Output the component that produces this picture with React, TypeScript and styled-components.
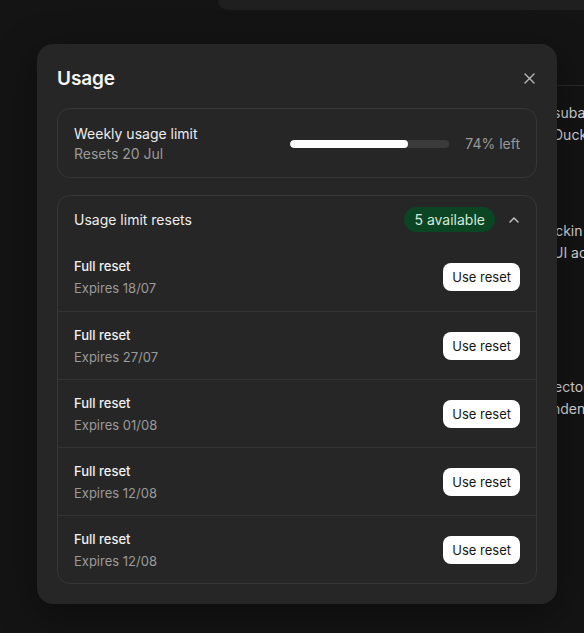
import React from "react";
import styled, { createGlobalStyle } from "styled-components";

const GlobalStyle = createGlobalStyle`
  html, body {
    margin: 0;
    padding: 0;
    background: #141414;
  }
  body {
    font-family: Inter, "Noto Sans", "Liberation Sans", sans-serif;
    -webkit-font-smoothing: antialiased;
  }
  * { box-sizing: border-box; }
`;

const Screen = styled.div`
  position: relative;
  width: 584px;
  height: 633px;
  overflow: hidden;
  background: #141414;
`;

/* ---------- page behind the dialog ---------- */

const Workspace = styled.div`
  display: flex;
  flex-direction: column;
  margin-left: 218px;
`;

const TopCard = styled.div`
  height: 10px;
  background: #1f1f1f;
  border-bottom-left-radius: 12px;
`;

const Rule = styled.div`
  margin-top: 75px;
  height: 1px;
  background: #2a2a2a;
`;

const Transcript = styled.div`
  display: flex;
  flex-direction: column;
  padding: 16px 0 0 335px;
`;

const Paragraph = styled.div<{ $space: number }>`
  display: flex;
  flex-direction: column;
  margin-top: ${(p) => p.$space}px;
  font-size: 14px;
  line-height: 22px;
  color: #d6d6d6;
  white-space: nowrap;
`;

const Line = styled.span<{ $shift: number }>`
  margin-left: ${(p) => p.$shift}px;
`;

/* ---------- dialog ---------- */

const Dialog = styled.div`
  position: absolute;
  left: 37px;
  top: 44px;
  width: 520px;
  height: 560px;
  background: #262626;
  border-radius: 16px;
  padding: 20px 20px 0;
  display: flex;
  flex-direction: column;
  box-shadow: 0 10px 40px rgba(0, 0, 0, 0.4);
`;

const DialogHeader = styled.div`
  display: flex;
  align-items: center;
  justify-content: space-between;
  height: 28px;
  margin-bottom: 16px;
`;

const Title = styled.h2`
  margin: 0;
  font-size: 19px;
  font-weight: 600;
  color: #f4f4f4;
  letter-spacing: -0.1px;
`;

const IconButton = styled.button`
  display: flex;
  align-items: center;
  justify-content: center;
  width: 20px;
  height: 20px;
  margin-right: -2px;
  padding: 0;
  border: none;
  background: transparent;
  color: #b8b8b8;
  cursor: pointer;
`;

const Panel = styled.section`
  border: 1px solid #363636;
  border-radius: 13px;
  display: flex;
  flex-direction: column;
`;

const LimitPanel = styled(Panel)`
  flex-direction: row;
  align-items: center;
  justify-content: space-between;
  height: 70px;
  padding: 2px 16px 0;
  margin-bottom: 17px;
`;

const Stack = styled.div`
  display: flex;
  flex-direction: column;
`;

const PrimaryText = styled.span`
  font-size: 14px;
  line-height: 20px;
  color: #ececec;
`;

const SecondaryText = styled.span`
  font-size: 14px;
  line-height: 20px;
  color: #999999;
`;

const Meter = styled.div`
  display: flex;
  align-items: center;
  gap: 16px;
  margin-top: -1px;
`;

const Track = styled.div`
  width: 159px;
  height: 8px;
  border-radius: 4px;
  background: #3b3b3b;
  overflow: hidden;
`;

const Fill = styled.div`
  height: 100%;
  border-radius: 4px;
  background: #ffffff;
`;

const PanelHeader = styled.div`
  display: flex;
  align-items: center;
  justify-content: space-between;
  height: 47px;
  padding: 0 16px;
`;

const HeaderEnd = styled.div`
  display: flex;
  align-items: center;
  gap: 13px;
`;

const Badge = styled.span`
  display: inline-flex;
  align-items: center;
  height: 25px;
  padding: 0 10px;
  border-radius: 13px;
  background: #0b4524;
  color: #d2ead8;
  font-size: 14px;
`;

const Chevron = styled.span`
  display: flex;
  width: 12px;
  justify-content: center;
  color: #c8c8c8;
`;

const ResetRow = styled.div<{ $first: boolean }>`
  display: flex;
  align-items: center;
  justify-content: space-between;
  height: 68px;
  padding: 0 16px;
  border-top: ${(p) => (p.$first ? "none" : "1px solid #333333")};
`;

const RowText = styled.div`
  display: flex;
  flex-direction: column;
  gap: 2px;
`;

const RowTitle = styled.span`
  font-size: 13px;
  line-height: 20px;
  font-weight: 500;
  color: #f0f0f0;
`;

const RowMeta = styled.span`
  font-size: 13px;
  line-height: 20px;
  color: #9a9a9a;
`;

const UseButton = styled.button`
  height: 28px;
  padding: 0 9px;
  border: none;
  border-radius: 8px;
  background: #ffffff;
  color: #161616;
  font-family: inherit;
  font-size: 13px;
  cursor: pointer;
`;

const resets = ["18/07", "27/07", "01/08", "12/08", "12/08"];

const paragraphs: { space: number; lines: { text: string; shift: number }[] }[] = [
  {
    space: 0,
    lines: [
      { text: "subag", shift: 0 },
      { text: "Duck", shift: 0 },
    ],
  },
  {
    space: 74,
    lines: [
      { text: "eckin", shift: -6 },
      { text: "UI ac", shift: 0 },
    ],
  },
  {
    space: 112,
    lines: [
      { text: "rector", shift: -4 },
      { text: "nden", shift: -1 },
    ],
  },
];

export default function App() {
  const left = 74;
  return (
    <>
      <GlobalStyle />
      <Screen>
        <Workspace>
          <TopCard />
          <Rule />
          <Transcript>
            {paragraphs.map((para, i) => (
              <Paragraph key={i} $space={para.space}>
                {para.lines.map((l) => (
                  <Line key={l.text} $shift={l.shift}>
                    {l.text}
                  </Line>
                ))}
              </Paragraph>
            ))}
          </Transcript>
        </Workspace>

        <Dialog role="dialog" aria-label="Usage">
          <DialogHeader>
            <Title>Usage</Title>
            <IconButton aria-label="Close">
              <svg width="11" height="11" viewBox="0 0 11 11" fill="none">
                <path
                  d="M1 1L10 10M10 1L1 10"
                  stroke="currentColor"
                  strokeWidth="1.4"
                  strokeLinecap="round"
                />
              </svg>
            </IconButton>
          </DialogHeader>

          <LimitPanel>
            <Stack>
              <PrimaryText>Weekly usage limit</PrimaryText>
              <SecondaryText>Resets 20 Jul</SecondaryText>
            </Stack>
            <Meter>
              <Track>
                <Fill style={{ width: `${left}%` }} />
              </Track>
              <SecondaryText>{left}% left</SecondaryText>
            </Meter>
          </LimitPanel>

          <Panel>
            <PanelHeader>
              <PrimaryText>Usage limit resets</PrimaryText>
              <HeaderEnd>
                <Badge>{resets.length} available</Badge>
                <Chevron>
                  <svg width="10" height="6" viewBox="0 0 10 6" fill="none">
                    <path
                      d="M1 5L5 1L9 5"
                      stroke="currentColor"
                      strokeWidth="1.4"
                      strokeLinecap="round"
                      strokeLinejoin="round"
                    />
                  </svg>
                </Chevron>
              </HeaderEnd>
            </PanelHeader>
            {resets.map((date, i) => (
              <ResetRow key={i} $first={i === 0}>
                <RowText>
                  <RowTitle>Full reset</RowTitle>
                  <RowMeta>Expires {date}</RowMeta>
                </RowText>
                <UseButton>Use reset</UseButton>
              </ResetRow>
            ))}
          </Panel>
        </Dialog>
      </Screen>
    </>
  );
}
